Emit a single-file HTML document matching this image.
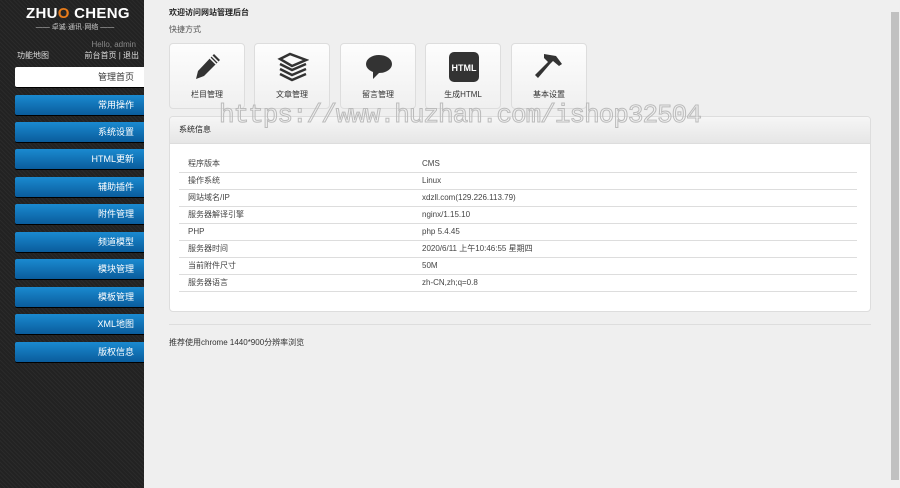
<!DOCTYPE html>
<html><head><meta charset="utf-8"><style>
*{margin:0;padding:0;box-sizing:border-box}
body{width:900px;height:488px;overflow:hidden;background:#efefef;font-family:"Liberation Sans","Noto Sans CJK SC",sans-serif;font-size:9px;color:#333;position:relative}
#side{position:absolute;left:0;top:0;width:144px;height:488px;background:#262626;background-image:repeating-linear-gradient(45deg,#2a2a2a 0 1px,#222 1px 3px)}
.logo{position:absolute;left:26px;top:5px;color:#fff;font-weight:bold;font-size:15px;letter-spacing:0.3px}
.logo span{color:#e77b1a}
.sub{position:absolute;left:26px;top:22px;color:#ccc;font-size:7px;width:98px;text-align:center}
.hello{position:absolute;right:8px;top:40px;color:#888;font-size:8px}
.l1{position:absolute;left:17px;top:50px;color:#ddd;font-size:8px}
.l2{position:absolute;right:5px;top:50px;color:#ddd;font-size:8px}
.m{position:absolute;left:15px;width:129px;height:20px;border-radius:2px 0 0 2px;background:linear-gradient(#1a8ad0,#0a5c9c);color:#fff;text-align:right;padding-right:10px;line-height:20px;font-size:9px;box-shadow:0 1px 0 #000}
.m.w{background:#fff;color:#333}
#scroll{position:absolute;right:0;top:0;width:10px;height:488px;background:#f0f0f0}
#scroll div{position:absolute;left:1px;top:12px;width:8px;height:468px;background:#c1c1c1}
.t1{position:absolute;left:169px;top:7px;font-size:8px;font-weight:bold;color:#222}
.t2{position:absolute;left:169px;top:24px;font-size:8px;color:#555}
.q{position:absolute;top:43px;width:76px;height:66px;background:linear-gradient(#fdfdfd,#f0f0f0);border:1px solid #ddd;border-radius:4px;text-align:center;font-size:8px;color:#333}
.q svg{position:absolute;left:22px;top:7px}
.q p{position:absolute;left:0;right:0;top:45px}
#panel{position:absolute;left:169px;top:116px;width:702px;height:196px;background:#fff;border:1px solid #ddd;border-radius:4px;overflow:hidden}
#panel .h{height:27px;background:linear-gradient(#f6f6f6,#e6e6e6);border-bottom:1px solid #ddd;padding-left:9px;line-height:25px;font-size:8px;color:#222}
table{position:absolute;left:9px;top:38px;width:678px;border-collapse:collapse;table-layout:fixed}
td{height:17px;border-bottom:1px solid #ddd;font-size:8px;color:#444;padding-left:9px}
td+td{padding-left:0}
.hr{position:absolute;left:169px;top:324px;width:702px;border-top:1px solid #ddd}
.ft{position:absolute;left:169px;top:337px;font-size:8px;color:#333}
.wm{position:absolute;left:219px;top:100px;font-family:"Liberation Mono",monospace;font-size:26px;color:transparent;-webkit-text-stroke:1px #bbb;letter-spacing:-1px}
</style></head><body>
<div id="side">
<div class="logo">ZHU<span>O</span> CHENG</div>
<div class="sub">—— 卓诚·通讯·网络 ——</div>
<div class="hello">Hello, admin</div>
<div class="l1">功能地图</div>
<div class="l2">前台首页 | 退出</div>
<div class="m w" style="top:67px">管理首页</div>
<div class="m" style="top:95px">常用操作</div>
<div class="m" style="top:122px">系统设置</div>
<div class="m" style="top:149px">HTML更新</div>
<div class="m" style="top:177px">辅助插件</div>
<div class="m" style="top:204px">附件管理</div>
<div class="m" style="top:232px">频道模型</div>
<div class="m" style="top:259px">模块管理</div>
<div class="m" style="top:287px">模板管理</div>
<div class="m" style="top:314px">XML地图</div>
<div class="m" style="top:342px">版权信息</div>
</div>
<div class="t1">欢迎访问网站管理后台</div>
<div class="t2">快捷方式</div>
<div class="q" style="left:169px"><svg width="32" height="32" viewBox="0 0 32 32"><path d="M22 3l6 6-16 16-8 3 2-8z" fill="#333"/><path d="M20 5l6 6M18 7l6 6" stroke="#fafafa" stroke-width="1.5"/></svg><p>栏目管理</p></div>
<div class="q" style="left:254px"><svg width="32" height="32" viewBox="0 0 32 32"><g fill="none" stroke="#333" stroke-width="2.5"><path d="M3 13l12 6 14-6"/><path d="M3 18l12 6 14-6"/><path d="M3 23l12 6 14-6"/><path d="M3 8l10-5 16 6-14 6z"/></g></svg><p>文章管理</p></div>
<div class="q" style="left:340px"><svg width="32" height="32" viewBox="0 0 32 32"><ellipse cx="16" cy="13" rx="13" ry="9" fill="#333"/><path d="M10 19l0 9 7-7z" fill="#333"/></svg><p>留言管理</p></div>
<div class="q" style="left:425px"><svg width="32" height="32" viewBox="0 0 32 32"><rect x="1" y="1" width="30" height="30" rx="5" fill="#333"/><text x="16" y="20" font-size="9" font-weight="bold" fill="#fff" text-anchor="middle" font-family="Liberation Sans">HTML</text></svg><p>生成HTML</p></div>
<div class="q" style="left:511px"><svg width="32" height="32" viewBox="0 0 32 32"><path d="M10 3l12 2 6 8-3 2-6-5-3 3-12 14-3-3 13-13-4-4z" fill="#333"/></svg><p>基本设置</p></div>
<div id="panel"><div class="h">系统信息</div>
<table>
<colgroup><col style="width:243px"><col style="width:435px"></colgroup>
<tr><td>程序版本</td><td>CMS</td></tr>
<tr><td>操作系统</td><td>Linux</td></tr>
<tr><td>网站域名/IP</td><td>xdzll.com(129.226.113.79)</td></tr>
<tr><td>服务器解译引擎</td><td>nginx/1.15.10</td></tr>
<tr><td>PHP</td><td>php 5.4.45</td></tr>
<tr><td>服务器时间</td><td>2020/6/11 上午10:46:55 星期四</td></tr>
<tr><td>当前附件尺寸</td><td>50M</td></tr>
<tr><td>服务器语言</td><td>zh-CN,zh;q=0.8</td></tr>
</table></div>
<div class="wm">https://www.huzhan.com/ishop32504</div>
<div class="hr"></div>
<div class="ft">推荐使用chrome 1440*900分辨率浏览</div>
<div id="scroll"><div></div></div>
</body></html>
